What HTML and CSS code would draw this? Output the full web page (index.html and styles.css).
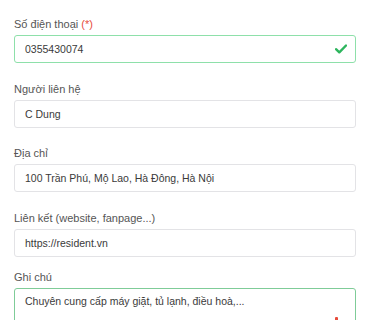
FILE: index.html
```html
<!DOCTYPE html>
<html lang="vi">
<head>
<meta charset="utf-8">
<link rel="stylesheet" href="styles.css">
</head>
<body>
<form class="form">
  <div class="group">
    <label class="label">Số điện thoại <span class="req">(*)</span></label>
    <div class="field">
      <input class="input input--valid" type="text" value="0355430074">
      <svg class="check" viewBox="0 0 12 10" width="12" height="10"><path d="M1 5.2 L4.3 8.3 L11 1.5" fill="none" stroke="#2db55d" stroke-width="2.4" stroke-linecap="round" stroke-linejoin="round"/></svg>
    </div>
  </div>
  <div class="group">
    <label class="label">Người liên hệ</label>
    <input class="input" type="text" value="C Dung">
  </div>
  <div class="group">
    <label class="label">Địa chỉ</label>
    <input class="input" type="text" value="100 Trần Phú, Mộ Lao, Hà Đông, Hà Nội">
  </div>
  <div class="group group--tight">
    <label class="label">Liên kết (website, fanpage...)</label>
    <input class="input" type="text" value="https://resident.vn">
  </div>
  <div class="group">
    <label class="label">Ghi chú</label>
    <div class="field">
      <textarea class="textarea">Chuyên cung cấp máy giặt, tủ lạnh, điều hoà,...</textarea>
      <span class="mark"></span>
    </div>
  </div>
</form>
</body>
</html>
```
FILE: styles.css
```css
* { box-sizing: border-box; }
html, body { margin: 0; padding: 0; background: #fff; }
body {
  font-family: "Liberation Sans", Arial, sans-serif;
  overflow: hidden;
  height: 320px;
}
.form {
  padding: 15px 14px 0 14px;
  display: flex;
  flex-direction: column;
}
.group {
  display: flex;
  flex-direction: column;
  margin-bottom: 16.5px;
}
.group--tight { margin-bottom: 11.5px; }
.label {
  font-size: 11px;
  line-height: 14px;
  padding-top: 2px;
  color: #555;
  margin-bottom: 4px;
}
.req { color: #e74c3c; }
.field { position: relative; }
.input {
  display: block;
  width: 100%;
  height: 28px;
  border: 1px solid #e3e3e6;
  border-radius: 3px;
  padding: 0 10px;
  font-family: inherit;
  font-size: 10.5px;
  color: #3a3a3a;
  background: #fff;
  outline: none;
}
.input--valid { border-color: #8ee0aa; }
.check {
  position: absolute;
  right: 9px;
  top: 9px;
}
.textarea {
  display: block;
  width: 100%;
  height: 70px;
  border: 1px solid #7fcc98;
  border-radius: 3px;
  padding: 5px 10px;
  font-family: inherit;
  font-size: 10.5px;
  line-height: 14px;
  color: #3a3a3a;
  resize: none;
  outline: none;
}
.mark {
  position: absolute;
  left: 321px;
  top: 29px;
  width: 3px;
  height: 4px;
  background: #e74c3c;
  border-radius: 1px;
}
```
